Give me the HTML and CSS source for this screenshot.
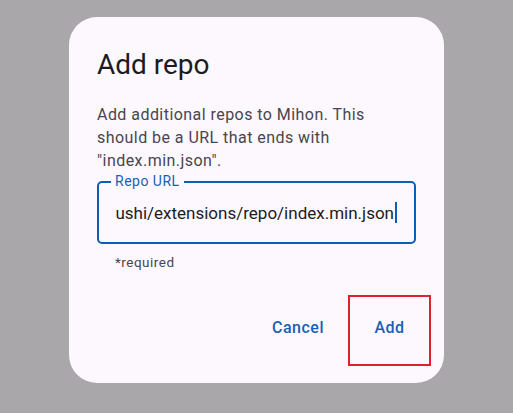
FILE: index.html
```html
<!DOCTYPE html>
<html lang="en">
<head>
    <meta charset="UTF-8">
    <meta name="viewport" content="width=device-width, initial-scale=1.0">
    <title>Add repo</title>
    <link rel="stylesheet" href="styles.css">
</head>
<body>
    <div class="dialog">
        <h1 class="title">Add repo</h1>
        <p class="message">Add additional repos to Mihon. This should be a URL that ends with "index.min.json".</p>

        <!-- Campo de URL -->
        <div class="field">
            <span class="field-label">Repo URL</span>
            <div class="field-value">
                <span>https://raw.githubusercontent.com/keiyoushi/extensions/repo/index.min.json</span><span class="caret"></span>
            </div>
        </div>
        <div class="helper">*required</div>

        <div class="actions">
            <button class="text-btn">Cancel</button>
            <button class="text-btn highlighted">Add</button>
        </div>
    </div>
</body>
</html>
```

FILE: styles.css
```css
body {
    margin: 0;
    width: 513px;
    height: 413px;
    background-color: #a9a7aa;
    font-family: Roboto, "Noto Sans", sans-serif;
    overflow: hidden;
}
.dialog {
    box-sizing: border-box;
    width: 375px;
    height: 366px;
    margin: 17px 0 0 69px;
    padding: 28px 28px 0 28px;
    background: #fcf8fd;
    border-radius: 28px;
}
.title {
    margin: 0;
    font-size: 28px;
    font-weight: 400;
    line-height: 40px;
    color: #1c1b1f;
}
.message {
    margin: 18px 0 0;
    font-size: 16px;
    letter-spacing: 0.45px;
    line-height: 23px;
    color: #49454f;
}
.field {
    position: relative;
    margin-top: 9px;
    height: 63px;
    border: 2px solid #0d5cb6;
    border-radius: 5px;
    box-sizing: border-box;
}
.field-label {
    position: absolute;
    left: 12px;
    top: -10px;
    padding: 0 4px;
    background: #fcf8fd;
    font-size: 14px;
    letter-spacing: 0.5px;
    line-height: 16px;
    color: #1a5fb4;
}
.field-value {
    display: flex;
    justify-content: flex-end;
    align-items: center;
    height: 100%;
    margin: 0 17px 0 16px;
    overflow: hidden;
    white-space: nowrap;
    font-size: 17px;
    letter-spacing: 0;
    color: #1c1b1f;
}
.caret {
    flex: none;
    width: 2px;
    height: 21px;
    margin-left: 1px;
    background: #0d5cb6;
}
.helper {
    margin: 10px 0 0 18px;
    font-size: 13.5px;
    letter-spacing: 0.5px;
    color: #49454f;
}
.actions {
    display: flex;
    justify-content: flex-end;
    margin: 25px -15px 0 0;
}
.text-btn {
    border: none;
    background: none;
    font-family: Roboto, "Noto Sans", sans-serif;
    font-size: 16px;
    font-weight: 500;
    letter-spacing: 0.5px;
    color: #1a5fb4;
    padding: 0 24px 6px;
    height: 71px;
    box-sizing: border-box;
}
.highlighted {
    width: 83px;
    padding: 0 0 6px;
    border: 2px solid #e0202c;
}
```
